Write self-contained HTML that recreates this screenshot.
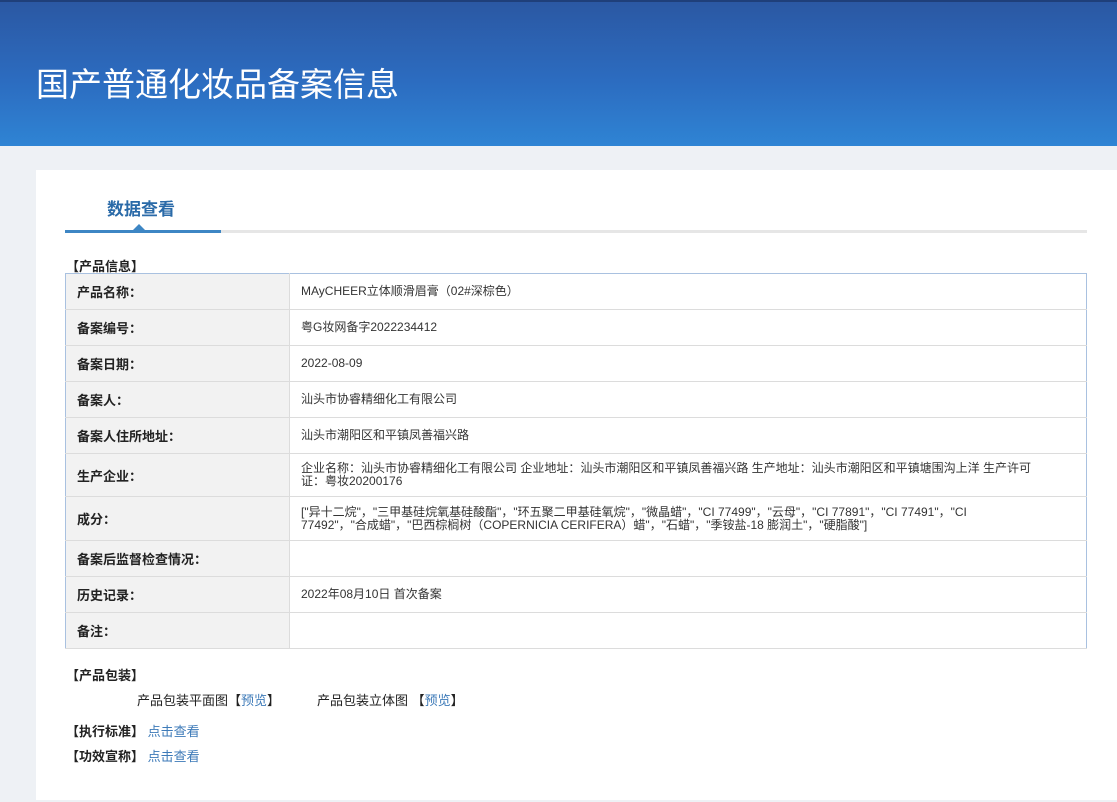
<!DOCTYPE html>
<html><head><meta charset="utf-8"><style>
body{margin:0;width:1117px;height:802px;background:#eef1f5;font-family:"Liberation Sans","Noto Sans CJK SC",sans-serif;overflow:hidden;position:relative;color:#333}
.hd{position:absolute;left:0;top:0;width:1117px;height:146px;background:linear-gradient(180deg,#2b58a3 0%,#2c6cc0 55%,#2f84d4 100%);border-top:2px solid #1f3f7a;box-sizing:border-box;overflow:hidden}
.hd h1{position:absolute;left:36px;top:56px;margin:0;font-size:33px;font-weight:normal;color:#fff;font-family:"Noto Sans CJK SC",sans-serif;letter-spacing:0px}
.pn{position:absolute;left:36px;top:170px;width:1081px;height:630px;background:#fff}
.tab{position:absolute;left:107px;top:195px;font-size:17px;font-weight:bold;color:#2a6aa8}
.ln{position:absolute;left:65px;top:230px;width:1022px;height:3px;background:#e6e6e6}
.ln i{position:absolute;left:0;top:0;width:156px;height:3px;background:#3d86c4}
.tri{position:absolute;left:133px;top:224px;border:6px solid transparent;border-bottom:6px solid #3d86c4;border-top:0}
.sec{position:absolute;font-size:13px;font-weight:bold;color:#222}
table{position:absolute;left:65px;top:273px;width:1022px;border-collapse:collapse;border:1px solid #a9c1e0;font-size:12px}
td{border-bottom:1px solid #dcdcdc;padding:0 11px;vertical-align:middle}
td.l{width:201px;background:#f2f2f2;font-weight:bold;font-size:13px;color:#222;border-right:1px solid #dcdcdc}
td.v{line-height:13px}
a{color:#3d7ab8;text-decoration:none;font-weight:normal}
.t{position:absolute;font-size:13px;color:#222}
</style></head><body>
<div class="hd"><h1>国产普通化妆品备案信息</h1></div>
<div class="pn"></div>
<div class="tab">数据查看</div>
<div class="ln"><i></i></div>
<div class="tri"></div>
<div class="sec" style="left:66px;top:256px">【产品信息】</div>
<table>
<tr style="height:36px"><td class="l">产品名称：</td><td class="v">MAyCHEER立体顺滑眉膏（02#深棕色）</td></tr>
<tr style="height:36px"><td class="l">备案编号：</td><td class="v">粤G妆网备字2022234412</td></tr>
<tr style="height:36px"><td class="l">备案日期：</td><td class="v">2022-08-09</td></tr>
<tr style="height:36px"><td class="l">备案人：</td><td class="v">汕头市协睿精细化工有限公司</td></tr>
<tr style="height:36px"><td class="l">备案人住所地址：</td><td class="v">汕头市潮阳区和平镇凤善福兴路</td></tr>
<tr style="height:43px"><td class="l">生产企业：</td><td class="v">企业名称：汕头市协睿精细化工有限公司 企业地址：汕头市潮阳区和平镇凤善福兴路 生产地址：汕头市潮阳区和平镇塘围沟上洋 生产许可<br>证：粤妆20200176</td></tr>
<tr style="height:44px"><td class="l">成分：</td><td class="v">["异十二烷"，"三甲基硅烷氧基硅酸酯"，"环五聚二甲基硅氧烷"，"微晶蜡"，"CI 77499"，"云母"，"CI 77891"，"CI 77491"，"CI<br>77492"，"合成蜡"，"巴西棕榈树（COPERNICIA CERIFERA）蜡"，"石蜡"，"季铵盐-18 膨润土"，"硬脂酸"]</td></tr>
<tr style="height:36px"><td class="l">备案后监督检查情况：</td><td class="v"></td></tr>
<tr style="height:36px"><td class="l">历史记录：</td><td class="v">2022年08月10日 首次备案</td></tr>
<tr style="height:36px"><td class="l">备注：</td><td class="v"></td></tr>
</table>
<div class="sec" style="left:66px;top:665px">【产品包装】</div>
<div class="t" style="left:137px;top:690px">产品包装平面图【<a>预览</a>】</div>
<div class="t" style="left:317px;top:690px">产品包装立体图 【<a>预览</a>】</div>
<div class="sec" style="left:66px;top:721px">【执行标准】 <a>点击查看</a></div>
<div class="sec" style="left:66px;top:746px">【功效宣称】 <a>点击查看</a></div>
</body></html>
